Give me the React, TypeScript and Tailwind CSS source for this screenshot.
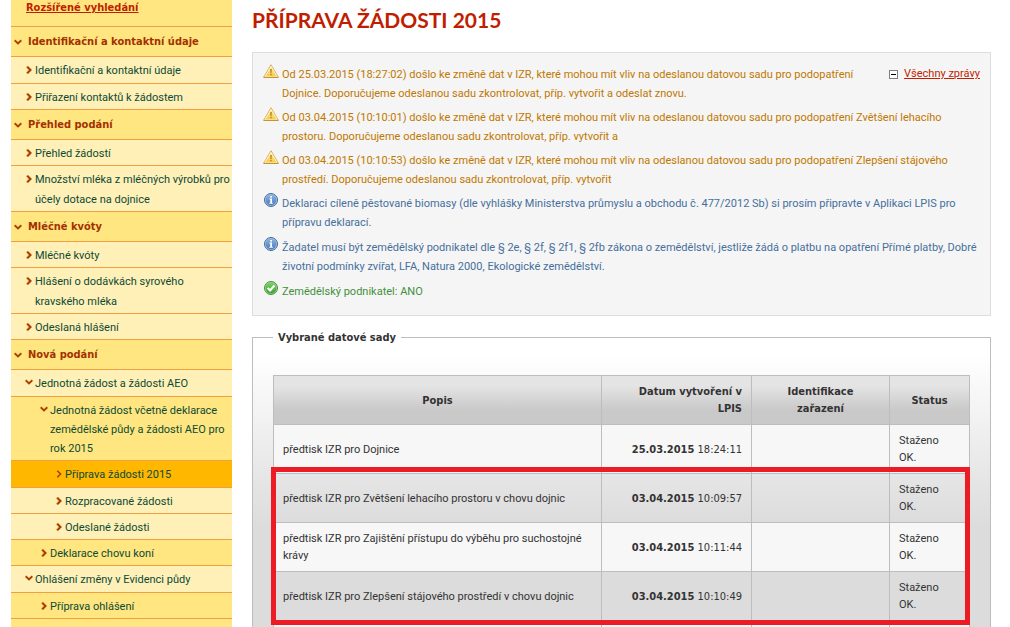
import React from "react";

type Kind = "warning" | "info" | "ok";

function ArrowRight({ active = false }: { active?: boolean }) {
  return (
    <svg width="6" height="8" viewBox="0 0 6 8" fill="none" aria-hidden="true">
      {!active && <path d="M0.5 0.7 L3.2 4 L0.5 7.3" stroke="#f0b040" strokeWidth="1.6" />}
      <path d="M1.3 0.7 L4.6 4 L1.3 7.3" stroke="#a83a08" strokeWidth={active ? 1.5 : 1.9} />
    </svg>
  );
}

function ArrowDown() {
  return (
    <svg width="8" height="6" viewBox="0 0 8 6" fill="none" aria-hidden="true">
      <path d="M0.6 0.8 L4 3.6 L7.4 0.8" stroke="#f0b040" strokeWidth="1.5" />
      <path d="M0.7 1.4 L4 4.6 L7.3 1.4" stroke="#a83a08" strokeWidth="1.8" />
    </svg>
  );
}

function WarningIcon() {
  return (
    <svg width="16" height="14" viewBox="0 0 16 14" aria-hidden="true">
      <defs>
        <linearGradient id="warnFill" x1="0" y1="0" x2="0" y2="1">
          <stop offset="0" stopColor="#fbe89a" />
          <stop offset="1" stopColor="#f6cd45" />
        </linearGradient>
      </defs>
      <path d="M8 0.7 L15.4 13.3 H0.6 Z" fill="#fffbe6" stroke="#dfb25c" strokeLinejoin="round" />
      <path d="M0.6 13.4 H15.4" stroke="#c98d2c" />
      <path d="M8 3 L13.4 12.2 H2.6 Z" fill="url(#warnFill)" />
      <path d="M7.1 5 H8.9 L8.6 9 H7.4 Z" fill="#c08a2c" />
      <rect x="7.2" y="9.8" width="1.6" height="1.5" fill="#c08a2c" />
    </svg>
  );
}

function InfoIcon() {
  return (
    <svg width="14" height="14" viewBox="0 0 14 14" aria-hidden="true">
      <defs>
        <linearGradient id="infoFill" x1="0" y1="0" x2="0" y2="1">
          <stop offset="0" stopColor="#8ab4de" />
          <stop offset="1" stopColor="#4c7cb8" />
        </linearGradient>
      </defs>
      <circle cx="7" cy="7" r="6.5" fill="#a9c6e6" stroke="#44699c" />
      <circle cx="7" cy="7" r="5.4" fill="url(#infoFill)" />
      <rect x="6.2" y="3" width="1.8" height="1.6" fill="#fff" />
      <path d="M5.4 5.6 H8 V9.7 H8.8 V10.7 H5.3 V9.7 H6.3 V6.6 H5.4 Z" fill="#fff" />
    </svg>
  );
}

function OkIcon() {
  return (
    <svg width="14" height="14" viewBox="0 0 14 14" aria-hidden="true">
      <defs>
        <linearGradient id="okFill" x1="0" y1="0" x2="0" y2="1">
          <stop offset="0" stopColor="#7fd069" />
          <stop offset="1" stopColor="#3fa037" />
        </linearGradient>
      </defs>
      <circle cx="7" cy="7" r="6.5" fill="#9fd98f" stroke="#3f9836" />
      <circle cx="7" cy="7" r="5.5" fill="url(#okFill)" />
      <path d="M3.6 7 L6.1 9.4 L10.5 4.5" fill="none" stroke="#fff" strokeWidth="2.2" />
    </svg>
  );
}

function MenuHeader({ children }: { children: React.ReactNode }) {
  return (
    <li className="border-b border-[#f0a040] bg-[#ffe680]">
      <a href="#" className="flex items-center gap-[6px] pt-[1px] pl-[3px] font-['DejaVu_Sans_Condensed','DejaVu_Sans',sans-serif] text-[11px] leading-[28px] font-bold text-[#a33100]">
        <ArrowDown />
        {children}
      </a>
    </li>
  );
}

const indents = ["pl-[14px]", "pl-[29px]", "pl-[44px]"];

const rhythms = {
  normal: "pt-[4px] pb-[1px] leading-[20px]",
  tall: "pt-[4px] pb-[2px] leading-[20px]",
  block: "pt-[4px] pb-[2px] leading-[19px]",
};

interface ItemProps {
  level?: 0 | 1 | 2;
  open?: boolean;
  active?: boolean;
  rhythm?: keyof typeof rhythms;
  children: React.ReactNode;
}

function MenuItem({ level = 0, open = false, active = false, rhythm = "normal", children }: ItemProps) {
  const bg = active ? "bg-[#ffb700]" : level === 1 ? "bg-[#ffe680]" : "bg-[#fff0b8]";
  return (
    <li className={`border-b border-[#f0a040] ${bg}`}>
      <a href="#" className={`flex text-[11px] text-[#0c4a35] ${indents[level]} ${rhythms[rhythm]}`}>
        <span className={`flex w-[10px] shrink-0 pt-[5px] ${open ? "" : "pl-[1px]"}`}>
          {open ? <ArrowDown /> : <ArrowRight active={active} />}
        </span>
        <span className="whitespace-nowrap">{children}</span>
      </a>
    </li>
  );
}

const kindColor: Record<Kind, string> = {
  warning: "mb-[4px] text-[#c07800]",
  info: "mb-[5px] text-[#466f9c]",
  ok: "text-[#43903c]",
};

function Message({ kind, children }: { kind: Kind; children: React.ReactNode }) {
  return (
    <li className={`flex ${kindColor[kind]}`}>
      <span className="flex w-[19px] shrink-0">
        {kind === "warning" && <WarningIcon />}
        {kind === "info" && <span className="pl-[1px]"><InfoIcon /></span>}
        {kind === "ok" && <span className="pl-[1px]"><OkIcon /></span>}
      </span>
      <span className="pt-[1px] whitespace-nowrap">{children}</span>
    </li>
  );
}

const rows = [
  { name: "předtisk IZR pro Dojnice", date: "25.03.2015", time: "18:24:11", bg: "bg-[#f7f7f7]" },
  { name: "předtisk IZR pro Zvětšení lehacího prostoru v chovu dojnic", date: "03.04.2015", time: "10:09:57", bg: "bg-linear-to-b from-[#e6e6e6] to-[#dcdcdc]" },
  { name: "předtisk IZR pro Zajištění přístupu do výběhu pro suchostojné krávy", date: "03.04.2015", time: "10:11:44", bg: "bg-[#f7f7f7]" },
  { name: "předtisk IZR pro Zlepšení stájového prostředí v chovu dojnic", date: "03.04.2015", time: "10:10:49", bg: "bg-[#dcdcdc]" },
];

export default function App() {
  return (
    <div className="flex h-screen overflow-hidden bg-white pl-[11px] font-[Roboto,sans-serif] text-[11px] text-[#333]">
      <aside className="w-[221px] shrink-0 bg-[#ffe680]">
        <div className="border-b border-[#f0a040] pb-[11px] pl-[15px] leading-[15px]">
          <a href="#" className="font-['DejaVu_Sans_Condensed','DejaVu_Sans',sans-serif] font-bold text-[#bf1e00] underline">Rozšířené vyhledání</a>
        </div>
        <nav>
          <ul>
            <MenuHeader>Identifikační a kontaktní údaje</MenuHeader>
            <MenuItem rhythm="tall">Identifikační a kontaktní údaje</MenuItem>
            <MenuItem>Přiřazení kontaktů k žádostem</MenuItem>
            <MenuHeader>Přehled podání</MenuHeader>
            <MenuItem>Přehled žádostí</MenuItem>
            <MenuItem>Množství mléka z mléčných výrobků pro<br />účely dotace na dojnice</MenuItem>
            <MenuHeader>Mléčné kvóty</MenuHeader>
            <MenuItem>Mléčné kvóty</MenuItem>
            <MenuItem>Hlášení o dodávkách syrového<br />kravského mléka</MenuItem>
            <MenuItem>Odeslaná hlášení</MenuItem>
            <MenuHeader>Nová podání</MenuHeader>
            <MenuItem open rhythm="tall">Jednotná žádost a žádosti AEO</MenuItem>
            <MenuItem level={1} open rhythm="block">Jednotná žádost včetně deklarace<br />zemědělské půdy a žádosti AEO pro<br />rok 2015</MenuItem>
            <MenuItem level={2} active rhythm="tall">Příprava žádosti 2015</MenuItem>
            <MenuItem level={2}>Rozpracované žádosti</MenuItem>
            <MenuItem level={2}>Odeslané žádosti</MenuItem>
            <MenuItem level={1}>Deklarace chovu koní</MenuItem>
            <MenuItem open rhythm="tall">Ohlášení změny v Evidenci půdy</MenuItem>
            <MenuItem level={1}>Příprava ohlášení</MenuItem>
          </ul>
        </nav>
      </aside>

      <main className="flex min-w-0 flex-1 flex-col pr-[19px] pl-5">
        <h1 className="pt-[6px] font-[Lato,sans-serif] text-[21px] leading-[28px] font-bold text-[#bf1e00]">PŘÍPRAVA ŽÁDOSTI 2015</h1>

        <section className="mt-[18px] flex justify-between border border-[#ddd] bg-[#f5f5f5] pt-[11px] pr-[10px] pb-[14px] pl-[10px]">
          <ul className="w-0 flex-1 leading-[19px]">
            <Message kind="warning">Od 25.03.2015 (18:27:02) došlo ke změně dat v IZR, které mohou mít vliv na odeslanou datovou sadu pro podopatření<br />Dojnice. Doporučujeme odeslanou sadu zkontrolovat, příp. vytvořit a odeslat znovu.</Message>
            <Message kind="warning">Od 03.04.2015 (10:10:01) došlo ke změně dat v IZR, které mohou mít vliv na odeslanou datovou sadu pro podopatření Zvětšení lehacího<br />prostoru. Doporučujeme odeslanou sadu zkontrolovat, příp. vytvořit a</Message>
            <Message kind="warning">Od 03.04.2015 (10:10:53) došlo ke změně dat v IZR, které mohou mít vliv na odeslanou datovou sadu pro podopatření Zlepšení stájového<br />prostředí. Doporučujeme odeslanou sadu zkontrolovat, příp. vytvořit</Message>
            <Message kind="info">Deklaraci cíleně pěstované biomasy (dle vyhlášky Ministerstva průmyslu a obchodu č. 477/2012 Sb) si prosím připravte v Aplikaci LPIS pro<br />přípravu deklarací.</Message>
            <Message kind="info">Žadatel musí být zemědělský podnikatel dle § 2e, § 2f, § 2f1, § 2fb zákona o zemědělství, jestliže žádá o platbu na opatření Přímé platby, Dobré<br />životní podmínky zvířat, LFA, Natura 2000, Ekologické zemědělství.</Message>
            <Message kind="ok">Zemědělský podnikatel: ANO</Message>
          </ul>
          <a href="#" className="flex h-[20px] items-center gap-[6px] pt-[1px] text-[#bf1e00]">
            <svg width="9" height="9" viewBox="0 0 9 9" aria-hidden="true">
              <rect x="0.5" y="0.5" width="8" height="8" fill="#fff" stroke="#808080" />
              <path d="M2 4.5 H7" stroke="#000" />
            </svg>
            <span className="underline">Všechny zprávy</span>
          </a>
        </section>

        <fieldset className="mt-[13px] min-w-0 flex-1 border border-b-0 border-[#bdbdbd] bg-linear-to-b from-white from-[16px] to-[#dcdcdc] to-[190px] px-5">
          <legend className="px-[5px] font-['DejaVu_Sans_Condensed','DejaVu_Sans',sans-serif] leading-[17px] font-bold">Vybrané datové sady</legend>
          <div className="relative mt-[29px]">
            <table className="w-full table-fixed border-collapse leading-[17px]">
              <colgroup>
                <col />
                <col className="w-[150px]" />
                <col className="w-[138px]" />
                <col className="w-[80px]" />
              </colgroup>
              <thead className="font-['DejaVu_Sans_Condensed','DejaVu_Sans',sans-serif]">
                <tr className="h-[49px] bg-linear-to-b from-[#e4e4e4] from-20% to-[#c9c9c9] to-70%">
                  <th className="border border-[#bdbdbd] px-[9px]">Popis</th>
                  <th className="border border-[#bdbdbd] px-[9px] text-right">Datum vytvoření v<br />LPIS</th>
                  <th className="border border-[#bdbdbd] px-[9px]">Identifikace<br />zařazení</th>
                  <th className="border border-[#bdbdbd] px-[9px]">Status</th>
                </tr>
              </thead>
              <tbody>
                {rows.map((r) => (
                  <tr key={r.name} className={`h-[49px] ${r.bg}`}>
                    <td className="border border-[#bdbdbd] px-[9px]">{r.name}</td>
                    <td className="border border-[#bdbdbd] px-[9px] text-right font-['DejaVu_Sans_Condensed','DejaVu_Sans',sans-serif]"><b>{r.date}</b> {r.time}</td>
                    <td className="border border-[#bdbdbd]"></td>
                    <td className="border border-[#bdbdbd] px-[9px]">Staženo<br />OK.</td>
                  </tr>
                ))}
                <tr className="h-[49px] bg-[#f7f7f7]">
                  <td className="border border-[#bdbdbd]"></td>
                  <td className="border border-[#bdbdbd]"></td>
                  <td className="border border-[#bdbdbd]"></td>
                  <td className="border border-[#bdbdbd]"></td>
                </tr>
              </tbody>
            </table>
            <div className="pointer-events-none absolute top-[92px] right-0 -left-[2px] h-[158px] border-[5px] border-[#ed1c24]" />
          </div>
        </fieldset>
      </main>
    </div>
  );
}
